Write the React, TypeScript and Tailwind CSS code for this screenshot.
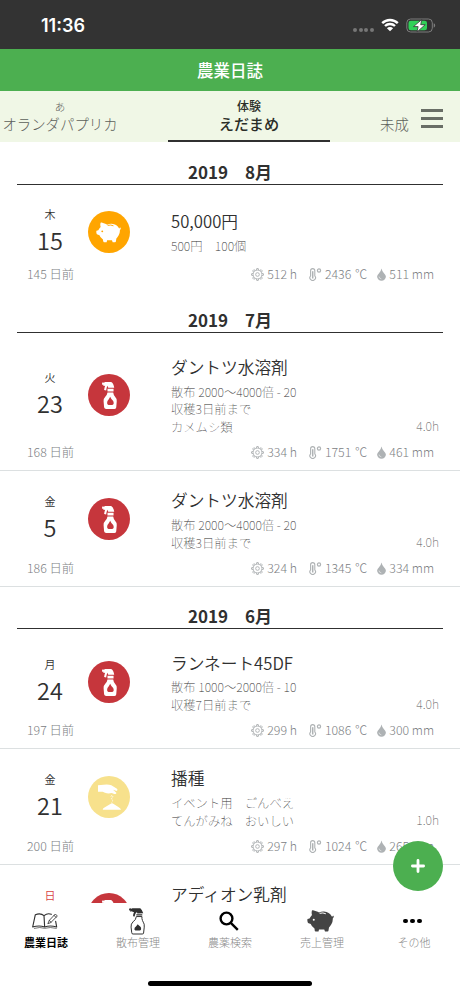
import React from "react";

const TEXT_COLOR = "text-[#303030]";

function Pig({ className, hole }: { className: string; hole: string }) {
  return (
    <svg viewBox="0 0 54 44" className={className}>
      <path
        fill="currentColor"
        d="M10 1 Q10 0 12 .6 L20 3 Q23 4 24 5 Q29 2.600 34 3 Q45 4 49 12 Q50 14 51 13 Q51 11 53 11.500 Q54.500 14 51.500 17 Q52 23 49 28 Q46 33 44 35 L43 41 Q43 43 41 43 L36 43 L34.500 39 L24 39 L23 43 L17 43 Q15 42 15 37 Q9 33 7.500 28 L2 26 Q0 22 1 18 L5 17 Q7 13 10 10 Q8.500 5 10 1Z"
      />
      <circle cx="13.500" cy="19.500" r="2" fill={hole} />
      <path d="M26 6.500 Q32 4.600 37 7.200" fill="none" stroke={hole} strokeWidth="2" strokeLinecap="round" />
    </svg>
  );
}

function Spray({ className }: { className: string }) {
  return (
    <svg viewBox="0 0 44 80" className={className} fill="currentColor">
      <path d="M0 2 L4 1 L4 3 L9 0 L27 0 Q34 4 36 17 L18 17 L17 11 Q13 14 12 25 L6 24 Q7 16 9 11 L4 12 L4 8 L0 8Z" />
      <rect x="16" y="20" width="18" height="8" />
      <path
        fillRule="evenodd"
        d="M16 31 L33 31 Q34 38 38 43 Q44 49 43.500 57 L42 75 Q42 80 37 80 L12 80 Q7 80 6 75 L4.500 57 Q4 49 10 43 Q15 38 16 31Z M24 44 Q21 51 16 56 Q13 66 19 68 L30 68 Q37 66 33 56 Q27 52 24 44Z"
      />
    </svg>
  );
}

function SprayOutline({ className }: { className: string }) {
  return (
    <svg viewBox="0 0 48 82" className={className}>
      <path fill="#303030" d="M0 2 L5 0 L5 3 L10 1 L34 1 Q41 7 43 16 L25 17 L24 13 Q18 15 17 26 L12 25 Q12 18 15 13 L7 10 L4 12 L4 8 L0 7Z M22 19h18v4h-18z" />
      <path fill="none" stroke="#303030" strokeWidth="3" d="M22 26 L39 26 L39 32 Q40 38 43 43 Q47 48 46 58 L44 76 Q44 79 40 79 L12 79 Q8 79 8 75 L6 58 Q5 48 12 42 Q21 36 22 26Z" />
      <path fill="#303030" d="M26 49 L31 54 Q34 56 36 59 Q38 68 32 68 L19 68 Q14 67 17 60 Q23 54 26 49Z" />
    </svg>
  );
}

function Sowing() {
  return (
    <svg viewBox="0 0 60 78" className="-ml-[3px] h-[26px] w-[20px] overflow-visible text-white">
      <path fill="currentColor" d="M0 4 L17 2 Q31 0 40 4 L57 14 Q61 18 56 21 L45 17 L55 26 Q56 31 49 30 L41 27 Q30 30 21 26 L14 23 L0 23Z" />
      <path d="M42 33 L38 39 M45 36 L42 43 M40 43 L44 50 M43 53 L40 57" stroke="currentColor" strokeWidth="2.500" strokeDasharray="3 2" />
      <path fill="currentColor" d="M14 77 Q14 72 22 69 L37 60 Q42 56 47 60 L60 68 Q68 72 69 77Z" />
    </svg>
  );
}

const TEETH = [0, 45, 90, 135, 180, 225, 270, 315];

function Gear() {
  return (
    <svg viewBox="0 0 24 24" className="size-[13px]" fill="none" stroke="#aeb2b4" strokeWidth="1.700">
      <circle cx="12" cy="12" r="8.200" />
      {TEETH.map((a) => (
        <path key={a} d="M9.800 3.800 10.600 1h2.800l.8 2.800" transform={`rotate(${a} 12 12)`} />
      ))}
      <circle cx="12" cy="12" r="3.400" />
    </svg>
  );
}

function Thermometer() {
  return (
    <svg viewBox="0 0 13 13" className="size-[13px]" fill="none" stroke="#aeb2b4">
      <path d="M1.600 7.800V2.700a2.100 2.100 0 0 1 4.200 0v5.100a2.800 2.800 0 1 1-4.200 0Z" strokeWidth="1.100" />
      <path d="M3.700 3.200v7.300" strokeWidth="1.500" />
      <circle cx="10" cy="2.500" r="1.600" strokeWidth="1.200" />
    </svg>
  );
}

function Drop() {
  return (
    <svg viewBox="0 0 9 13" className="h-[13px] w-[9px]">
      <path fill="#aeb2b4" d="M4.500.5Q5 3 6.800 5 8.900 7 8.900 8.600A4.400 4.200 0 0 1 .1 8.600Q.1 7 2.200 5 4 3 4.500.5Z" />
      <path d="M2 8.500Q2 10.500 4.300 10.800" fill="none" stroke="#fff" strokeWidth=".5" />
    </svg>
  );
}

type Kind = "sale" | "spray" | "sow";

function KindIcon({ kind }: { kind: Kind }) {
  if (kind === "sale")
    return (
      <div className="flex size-[42px] items-center justify-center rounded-full bg-[#ffa500]">
        <Pig className="-ml-px h-[21px] w-[25px] text-white" hole="#ffa500" />
      </div>
    );
  if (kind === "spray")
    return (
      <div className="flex size-[42px] items-center justify-center rounded-full bg-[#c6363c]">
        <Spray className="h-[27px] w-[15px] text-white" />
      </div>
    );
  return (
    <div className="flex size-[42px] items-center justify-center rounded-full bg-[#f7e18c]">
      <Sowing />
    </div>
  );
}

interface Entry {
  week: string;
  day: string;
  kind: Kind;
  title: string;
  lines: string[];
  hours?: string;
  ago: string;
  sun: string;
  temp: string;
  rain: string;
  first?: boolean;
  noBorder?: boolean;
}

function Row(e: Entry) {
  return (
    <article className={`${e.first ? "pt-[21px]" : "pt-[16px]"} ${e.noBorder ? "" : "border-b border-[#dce0e1]"}`}>
      <div className="flex min-h-[52px] items-center pl-[17px]">
        <div className={`flex w-[66px] flex-col items-center ${e.first ? "pb-px" : "pb-[3px]"}`}>
          <span className={`text-[11px] leading-[17px] font-[350] ${TEXT_COLOR}`}>{e.week}</span>
          <span className={`text-[23.500px] leading-[34px] font-[350] ${TEXT_COLOR}`}>{e.day}</span>
        </div>
        <div className={`ml-[5px] w-[83px] ${e.first ? "" : "pb-px"}`}>
          <KindIcon kind={e.kind} />
        </div>
        <div className="flex-1">
          <h3 className={`text-[16.700px] leading-[26px] font-[350] ${e.first ? "mb-[3.600px]" : "mb-[4.600px]"} ${TEXT_COLOR}`}>{e.title}</h3>
          {e.lines.map((l) => (
            <p key={l} className="text-[12.300px] leading-[17.700px] font-thin text-[#303030]">{l}</p>
          ))}
        </div>
        {e.hours && <span className="mr-[21px] mb-[2px] self-end text-[12.300px] leading-[18px] font-thin text-[#555]">{e.hours}</span>}
      </div>
      <div className="-mt-px flex h-[34px] items-center pr-[26px] pl-[27px] text-[12.300px] font-light text-[#7c8083]">
        <span className="flex-1">{e.ago}</span>
        <span className="flex items-center gap-[3px]"><Gear />{e.sun} h</span>
        <span className="ml-[12px] flex items-center gap-[3px]"><Thermometer /><span>{e.temp} <span className="ml-px">℃</span></span></span>
        <span className="ml-[10px] flex items-center gap-[3px]"><Drop />{e.rain} mm</span>
      </div>
    </article>
  );
}

function Month({ m }: { m: string }) {
  return (
    <h2 className={`mx-[17px] flex h-[42px] items-end justify-center border-b border-[#303030] text-[17px] leading-[25px] font-bold ${TEXT_COLOR}`}>
      2019　{m}月
    </h2>
  );
}

function NavItem({ label, active, children }: { label: string; active?: boolean; children: React.ReactNode }) {
  return (
    <div className="flex flex-1 flex-col items-center">
      <div className="flex h-[30px] items-center pt-[6px]">{children}</div>
      <span className={`text-[11px] leading-[18px] ${active ? "font-bold text-black" : "font-light text-[#8a8a8a]"}`}>{label}</span>
    </div>
  );
}

export default function App() {
  return (
    <div className="relative flex h-[996px] w-[460px] flex-col overflow-hidden bg-white font-['Noto_Sans_CJK_JP','Noto_Sans',sans-serif]">
      <header className="flex h-[49px] shrink-0 items-center bg-[#333] pr-[24px] pl-[41px] text-white">
        <span className="flex-1 pt-[2px] font-['Inter',sans-serif] text-[18px] font-semibold">11:36</span>
        <span className="mt-[10px] mr-[7px] flex gap-[1.600px]">
          {[0, 1, 2, 3].map((i) => <i key={i} className="size-[4px] rounded-full bg-[#777]" />)}
        </span>
        <svg viewBox="0 0 18 14" className="mr-[7px] h-[14px] w-[18px]">
          <path d="M1.200 5.200a11.200 11.200 0 0 1 15.600 0M4 8a7.200 7.200 0 0 1 10 0" fill="none" stroke="white" strokeWidth="2.400" />
          <path d="M9 13.300 5.900 10.300a4.400 4.400 0 0 1 6.200 0Z" fill="white" />
        </svg>
        <svg viewBox="0 0 30 15" className="mt-px h-[15px] w-[30px]">
          <rect x=".8" y="1" width="25.500" height="13" rx="3.800" fill="none" stroke="#7d7d7d" />
          <rect x="2.500" y="2.700" width="18.500" height="9.600" rx="2.300" fill="#30d158" />
          <path d="M27.700 5.300v4.400q1.500-.6 1.500-2.200t-1.500-2.200Z" fill="#7d7d7d" />
          <path d="m15.800 1.500-8.300 7.100h4.600l-1 5.300 8.100-7.200h-4.500Z" fill="white" stroke="#333" strokeWidth=".8" />
        </svg>
      </header>
      <div className="flex h-[42px] shrink-0 items-center justify-center bg-[#4caf50] text-[16.500px] font-medium text-white">農業日誌</div>
      <nav className="flex h-[51px] shrink-0 bg-[#f0f7e6]">
        <div className="w-[168px] pt-[8px] pr-[48px] text-center font-light whitespace-nowrap text-[#5c605a]">
          <div className="text-[10.500px] leading-[16px]">あ</div>
          <div className="text-[14.400px] leading-[18px]">オランダパプリカ</div>
        </div>
        <div className="w-[162px] border-b-2 border-[#303030] pt-[6px] text-center font-medium text-[#2a2d28]">
          <div className="text-[12px] leading-[17px]">体験</div>
          <div className="text-[15.200px] leading-[19px]">えだまめ</div>
        </div>
        <div className="flex flex-1 pl-[50px]">
          <span className="pt-[24px] text-[14.400px] leading-[18px] font-light text-[#5c605a]">未成</span>
          <span className="mt-[18px] ml-[12px] flex w-[22px] flex-col gap-[5px]">
            <i className="h-[3px] bg-[#696e66]" /><i className="h-[3px] bg-[#696e66]" /><i className="h-[3px] bg-[#696e66]" />
          </span>
        </div>
      </nav>
      <main className="h-[761px] shrink-0 overflow-hidden">
        <div className="h-px" />
        <Month m="8" />
        <Row first noBorder week="木" day="15" kind="sale" title="50,000円" lines={["500円　100個"]} ago="145 日前" sun="512" temp="2436" rain="511" />
        <Month m="7" />
        <Row first week="火" day="23" kind="spray" title="ダントツ水溶剤" lines={["散布 2000〜4000倍 - 20", "収穫3日前まで", "カメムシ類"]} hours="4.0h" ago="168 日前" sun="334" temp="1751" rain="461" />
        <Row week="金" day="5" kind="spray" title="ダントツ水溶剤" lines={["散布 2000〜4000倍 - 20", "収穫3日前まで"]} hours="4.0h" ago="186 日前" sun="324" temp="1345" rain="334" />
        <Month m="6" />
        <Row first week="月" day="24" kind="spray" title="ランネート45DF" lines={["散布 1000〜2000倍 - 10", "収穫7日前まで"]} hours="4.0h" ago="197 日前" sun="299" temp="1086" rain="300" />
        <Row week="金" day="21" kind="sow" title="播種" lines={["イベント用　ごんべえ", "てんがみね　おいしい"]} hours="1.0h" ago="200 日前" sun="297" temp="1024" rain="265" />
        <div className="flex items-start pt-[16px] pl-[17px]">
          <span className="w-[66px] pt-[6px] text-center text-[11px] leading-[17px] font-[350] text-[#d8413f]">日</span>
          <div className="mt-[12px] ml-[5px] w-[83px]"><KindIcon kind="spray" /></div>
          <h3 className={`text-[16.700px] leading-[26px] font-[350] ${TEXT_COLOR}`}>アディオン乳剤</h3>
        </div>
      </main>
      <footer className="flex flex-1 flex-col items-center bg-white">
        <div className="flex w-full">
          <NavItem label="農業日誌" active>
            <svg viewBox="0 0 78 48" className="mr-[2px] h-[16px] w-[26px]" fill="none" stroke="#303030" strokeWidth="3.400" strokeLinejoin="round" strokeLinecap="round">
              <path d="M38 42 36 8Q26-1 10 5L2 42Q22 36 38 42Q54 36 74 42L71 25M36 8Q47-1 58 4" />
              <path d="M7 46Q24 41 38 46Q54 41 73 46" strokeWidth="2" />
              <path d="m48 31 4-9L70 3l6 6-19 19ZM52 22l5 6M66 7l6 6" strokeWidth="2.500" />
            </svg>
          </NavItem>
          <NavItem label="散布管理"><SprayOutline className="mr-[2px] h-[27px] w-[16px]" /></NavItem>
          <NavItem label="農薬検索">
            <svg viewBox="0 0 20 20" className="mr-[3px] size-[20px]" fill="none" stroke="black" strokeWidth="2.400">
              <circle cx="7.500" cy="7.500" r="5.900" /><path d="m11.800 11.800 7 7" />
            </svg>
          </NavItem>
          <NavItem label="売上管理"><Pig className="mr-[3px] h-[22px] w-[27px] text-[#444]" hole="#fff" /></NavItem>
          <NavItem label="その他">
            <span className="mr-[3px] flex gap-[2.500px]">
              <i className="size-[4.500px] rounded-full bg-black" /><i className="size-[4.500px] rounded-full bg-black" /><i className="size-[4.500px] rounded-full bg-black" />
            </span>
          </NavItem>
        </div>
        <div className="mt-[30px] h-[5px] w-[164px] rounded-full bg-black" />
      </footer>
      <button className="absolute top-[841px] left-[393px] flex size-[50px] items-center justify-center rounded-full bg-[#4caf50]">
        <svg viewBox="0 0 14 14" className="size-[14px]" stroke="white" strokeWidth="2.800" strokeLinecap="round"><path d="M7 1.400v11.200M1.400 7h11.200" /></svg>
      </button>
    </div>
  );
}
